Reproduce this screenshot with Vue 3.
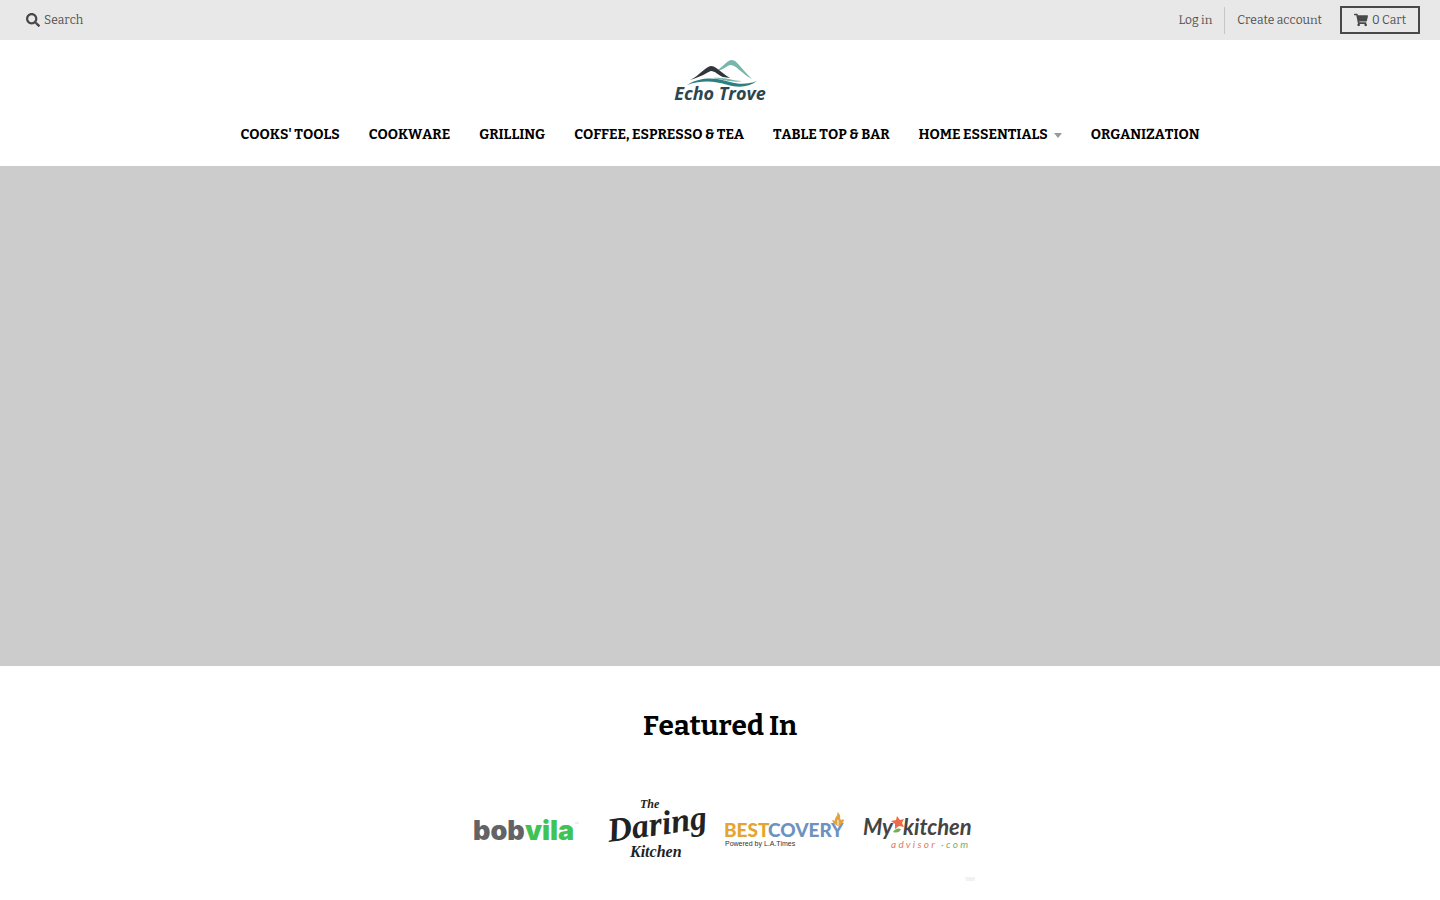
<script setup>
const links = [
  { label: "COOKS' TOOLS" },
  { label: 'COOKWARE' },
  { label: 'GRILLING' },
  { label: 'COFFEE, ESPRESSO & TEA' },
  { label: 'TABLE TOP & BAR' },
  { label: 'HOME ESSENTIALS', menu: true },
  { label: 'ORGANIZATION' },
]
</script>

<template>
  <div class="page">
    <div class="topbar">
      <a class="search" href="#search">
        <svg class="icon" viewBox="0 0 512 512" aria-hidden="true">
          <path d="M505 442.700 405.300 343c-4.500-4.500-10.600-7-17-7H372c27.600-35.300 44-79.700 44-128C416 93.100 322.900 0 208 0S0 93.100 0 208s93.100 208 208 208c48.300 0 92.700-16.400 128-44v16.300c0 6.400 2.500 12.500 7 17l99.700 99.700c9.400 9.400 24.600 9.400 33.900 0l28.300-28.300c9.400-9.400 9.400-24.600.1-34zM208 336c-70.700 0-128-57.200-128-128 0-70.700 57.200-128 128-128 70.700 0 128 57.200 128 128 0 70.700-57.200 128-128 128z" />
        </svg>
        <span>Search</span>
      </a>
      <div class="account">
        <a class="login" href="#login">Log in</a>
        <a class="register" href="#register">Create account</a>
        <a class="cart" href="#cart">
          <svg class="icon" viewBox="0 0 576 512" aria-hidden="true">
            <path d="M528.100 301.300l47.300-208C578.800 78.300 567.400 64 552 64H159.200l-9.200-44.800C147.800 8 137.900 0 126.500 0H24C10.700 0 0 10.700 0 24v16c0 13.300 10.700 24 24 24h69.900l70.200 343.400C147.300 417.100 136 435.200 136 456c0 30.900 25.100 56 56 56s56-25.100 56-56c0-15.700-6.400-29.800-16.800-40h209.600C430.400 426.200 424 440.300 424 456c0 30.900 25.100 56 56 56s56-25.100 56-56c0-22.200-12.900-41.300-31.600-50.400l5.500-24.300c3.400-15-8-29.300-23.400-29.300H218.100l-6.500-32h293.100c11.200 0 20.900-7.800 23.400-18.700z" />
          </svg>
          <span>0 Cart</span>
        </a>
      </div>
    </div>

    <header class="header">
      <a class="brand" href="#home" aria-label="Echo Trove">
        <svg viewBox="0 0 100 46" width="100" height="46">
          <path d="M46 13 C52 10 57 2 62 2 C67 2 71 11 82 21 C72 16 66 7 61 7 C57 7 54 12 46 13Z" fill="#78b5aa" />
          <path d="M20 22 C29 18 36 8 41 8 C46 8 50 14 60 20 L53 19 C48 17 45 13 41 13 C36 15 31 19 20 22Z" fill="#30363a" />
          <path d="M17 27 C34 17 48 21 60 24 C70 27 79 26 87 23 C79 29 69 30 58 27 C44 23 33 22 17 27Z" fill="#2f7f80" />
          <path d="M43 20 C55 19 63 23 72 23 C64 25 55 22 43 20Z" fill="#78b5aa" />
          <text class="echo" x="50" y="42" text-anchor="middle">Echo Trove</text>
        </svg>
      </a>
      <nav class="nav" aria-label="Main">
        <a v-for="link in links" :key="link.label" href="#collection">
          {{ link.label }}<i v-if="link.menu" class="caret"></i>
        </a>
      </nav>
    </header>

    <section class="hero" aria-label="Slideshow"></section>

    <section class="featured">
      <h2>Featured In</h2>
      <div class="logos">
        <svg viewBox="0 0 120 120" role="img" aria-label="bobvila">
          <text class="bob" x="8" y="70" fill="#626366">bob</text>
          <text class="bob" x="60" y="70" fill="#3fc354">vila</text>
          <path d="M110 53h4" stroke="#ddd" />
        </svg>
        <svg viewBox="0 0 120 120" role="img" aria-label="The Daring Kitchen">
          <g fill="#222">
            <text class="script small" x="45" y="38">The</text>
            <text class="script large" x="14" y="72" transform="rotate(-8 14 72)">Daring</text>
            <text class="script medium" x="35" y="87">Kitchen</text>
          </g>
        </svg>
        <svg viewBox="0 0 120 120" role="img" aria-label="Bestcovery, powered by L.A.Times">
          <text class="best" x="-1" y="67" fill="#e5a42e">BEST</text>
          <text class="best" x="43" y="67" fill="#6e92bf">COVERY</text>
          <path d="M113 56 C105 52 107 48 110 51 C109 47 114 46 112 42 C117 45 114 48 116 50 C121 47 119 54 113 56Z" fill="#e5a13a" />
          <path d="M113 55v-5" stroke="#fff" />
          <text class="powered" x="0" y="76">Powered by L.A.Times</text>
        </svg>
        <svg viewBox="0 0 120 120" role="img" aria-label="My kitchen advisor.com">
          <text class="kitchen" x="8" y="65">My</text>
          <text class="kitchen" x="48" y="65">kitchen</text>
          <path d="M42 46l3 4 4-1-2 4 2 4-5-1-4 3v-5l-4-3 5-1Z" fill="#ed6b4b" />
          <path d="M38 62q3-5 8-3-2 5-8 3Z" fill="#79ad51" />
          <text class="advisor" x="36" y="78" fill="#e3785e">a d v i s o r</text>
          <text class="advisor" x="86" y="78" fill="#7caf5e">· c o m</text>
          <path d="M110 108h10M111 110h9" stroke="#e4e4e4" />
        </svg>
      </div>
    </section>
  </div>
</template>

<style>
body { margin: 0; background: #fff; }
</style>

<style scoped>
.page {
  font-family: Bitter, "DejaVu Serif Condensed", "DejaVu Serif", serif;
  font-kerning: none;
  color: #000;
}
a { color: inherit; text-decoration: none; }
.topbar {
  display: flex;
  align-items: center;
  justify-content: space-between;
  height: 40px;
  padding: 0 20px 0 26px;
  background: #e8e8e8;
  color: #505050;
  font-size: 12px;
}
.icon { width: 14px; height: 14px; fill: #484848; }
.search, .cart { display: flex; align-items: center; gap: 4px; }
.account { display: flex; align-items: center; }
.login {
  padding-right: 12px;
  border-right: 1px solid #c6c6c6;
  line-height: 27px;
}
.register { padding: 0 18px 0 12px; }
.cart {
  box-sizing: border-box;
  height: 28px;
  padding: 0 12px;
  border: 2px solid #484848;
}
.header {
  display: flex;
  flex-direction: column;
  align-items: center;
  height: 126px;
}
.brand { margin-top: 18px; height: 46px; }
.brand svg { display: block; }
.echo {
  font: italic 700 18px "Open Sans", sans-serif;
  fill: #2b4650;
}
.nav {
  display: flex;
  gap: 29px;
  margin-top: 21px;
  font-size: 14px;
  font-weight: 700;
  line-height: 20px;
  white-space: nowrap;
}
.caret {
  display: inline-block;
  margin-left: 6px;
  border: 4px solid transparent;
  border-top: 5px solid #999;
  border-bottom: 0;
  vertical-align: 1px;
}
.hero { height: 500px; background: #ccc; }
.featured { text-align: center; }
h2 { margin: 0; padding-top: 41px; font-size: 28px; line-height: 38px; }
.logos {
  display: flex;
  justify-content: center;
  gap: 10px;
  margin-top: 25px;
}
.logos svg { width: 120px; height: 120px; }
.bob { font: 900 27px Inter, sans-serif; }
.script { font-family: "Liberation Serif", serif; font-style: italic; font-weight: 700; }
.small { font-size: 12px; }
.medium { font-size: 16px; }
.large { font-size: 34px; }
.best { font: 900 19px Lato, sans-serif; }
.powered { font: 7px "Liberation Sans", sans-serif; fill: #333; }
.kitchen { font: italic 700 22px Lato, sans-serif; fill: #444; }
.advisor { font: italic 10px Lato, sans-serif; }
</style>
